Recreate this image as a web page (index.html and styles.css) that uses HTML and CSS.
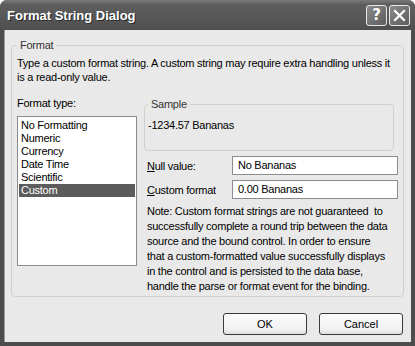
FILE: index.html
```html
<!DOCTYPE html>
<html lang="en">
<head>
  <meta charset="UTF-8" />
  <title>Format String Dialog</title>
  <link rel="stylesheet" href="styles.css">
</head>
<body>
  <div class="window">
    <!-- Title bar -->
    <div class="titlebar">
      <span class="title">Format String Dialog</span>
      <div class="caption-buttons">
        <button class="cap-btn">?</button>
        <button class="cap-btn">
          <svg width="13" height="13" viewBox="0 0 13 13">
            <path d="M2 2 L11 11 M11 2 L2 11" stroke="#fff" stroke-width="2.2" stroke-linecap="square" />
          </svg>
        </button>
      </div>
    </div>

    <div class="client">
      <fieldset class="group format-group">
        <legend>Format</legend>
        <p class="intro">Type a custom format string. A custom string may require extra handling unless it is a read-only value.</p>

        <div class="columns">
          <div class="left-col">
            <div class="label">Format type:</div>
            <ul class="listbox">
              <li>No Formatting</li>
              <li>Numeric</li>
              <li>Currency</li>
              <li>Date Time</li>
              <li>Scientific</li>
              <li class="selected">Custom</li>
            </ul>
          </div>

          <div class="right-col">
            <fieldset class="group sample-group">
              <legend>Sample</legend>
              <div class="sample">-1234.57 Bananas</div>
            </fieldset>

            <div class="field">
              <label><u>N</u>ull value:</label>
              <div class="textbox">No Bananas</div>
            </div>
            <div class="field">
              <label><u>C</u>ustom format</label>
              <div class="textbox">0.00 Bananas</div>
            </div>

            <p class="note">
              Note: Custom format strings are not guaranteed&nbsp; to<br>
              successfully complete a round trip between the data<br>
              source and the bound control. In order to ensure<br>
              that a custom-formatted value successfully displays<br>
              in the control and is persisted to the data base,<br>
              handle the parse or format event for the binding.
            </p>
          </div>
        </div>
      </fieldset>

      <div class="footer">
        <button class="btn">OK</button>
        <button class="btn">Cancel</button>
      </div>
    </div>
  </div>
</body>
</html>
```

FILE: styles.css
```css
/* Window frame */
body {
  margin: 0;
  padding: 0;
  background: #ffffff;
  font-family: 'Liberation Sans', Arial, sans-serif;
  font-size: 11px;
  letter-spacing: -0.25px;
  color: #000;
}
.window {
  width: 415px;
  height: 346px;
  display: flex;
  flex-direction: column;
  background: #4c4c4c;
  border-radius: 7px 7px 0 0;
  overflow: hidden;
}
.titlebar {
  height: 30px;
  flex: none;
  display: flex;
  align-items: center;
  justify-content: space-between;
  padding: 0 5px 0 7px;
  background: linear-gradient(#7a7a7a, #5e5e5e 15%, #575757 60%, #4e4e4e);
}
.title {
  color: #fff;
  font-family: 'Liberation Sans', Arial, sans-serif;
  font-weight: bold;
  font-size: 13px;
  letter-spacing: 0;
  text-shadow: 1px 1px 0 #2a2a2a;
}
.caption-buttons {
  display: flex;
  gap: 2px;
}
.cap-btn {
  width: 21px;
  height: 21px;
  padding: 0;
  border: 1px solid #e8e8e8;
  border-radius: 3px;
  background: linear-gradient(135deg, #8a8a8a, #5c5c5c);
  color: #fff;
  font-family: 'DejaVu Sans', sans-serif;
  font-weight: bold;
  font-size: 15px;
  line-height: 18px;
  display: flex;
  align-items: center;
  justify-content: center;
}
.client {
  flex: 1;
  display: flex;
  flex-direction: column;
  background: #e9e9e9;
  margin: 0 4px 4px 4px;
  border-left: 1px solid #9a9a9a;
}

/* Group boxes */
.group {
  border: 1px solid #d0d0cc;
  border-radius: 4px;
  margin: 0;
}
.group legend {
  color: #333;
  padding: 0 3px;
  line-height: 13px;
}
.format-group {
  margin: 9px 7px 0 6px;
  padding: 2px 5px 10px 5px;
  height: 258px;
  box-sizing: border-box;
}
.intro {
  margin: 2px 0 0;
  padding-right: 3px;
  line-height: 14px;
}
.columns {
  display: flex;
  gap: 7px;
  margin-top: 12px;
}
.left-col {
  width: 120px;
  flex: none;
}
.label {
  line-height: 14px;
}
.listbox {
  list-style: none;
  margin: 6px 0 0;
  padding: 2px 1px;
  height: 150px;
  box-sizing: border-box;
  background: #fff;
  border: 1px solid #8c8c8c;
}
.listbox li {
  line-height: 13px;
  padding-left: 2px;
}
.listbox li.selected {
  background: #5c5c5c;
  color: #fff;
}
.right-col {
  flex: 1;
  display: flex;
  flex-direction: column;
}
.sample-group {
  margin: 2px 4px 0 0;
  padding: 7px 3px 18px;
}
.sample {
  line-height: 14px;
}
.field {
  display: flex;
  align-items: center;
  margin-top: 5px;
}
.field label {
  width: 85px;
  flex: none;
  padding-left: 3px;
}
.textbox {
  flex: 1;
  height: 19px;
  line-height: 17px;
  box-sizing: border-box;
  background: #fff;
  border: 1px solid #8c8c8c;
  padding: 0 5px;
}
.note {
  margin: 5px 0 0 3px;
  line-height: 15px;
  white-space: nowrap;
}

/* Buttons */
.footer {
  display: flex;
  justify-content: flex-end;
  gap: 12px;
  margin-top: auto;
  padding: 0 8px 7px 0;
}
.btn {
  width: 84px;
  height: 22px;
  font-family: 'Liberation Sans', Arial, sans-serif;
  font-size: 11px;
  border: 1px solid #3a3a3a;
  border-radius: 3px;
  background: linear-gradient(#fdfdfd, #f0f0f0 80%, #dcdcdc);
  color: #000;
}
```
